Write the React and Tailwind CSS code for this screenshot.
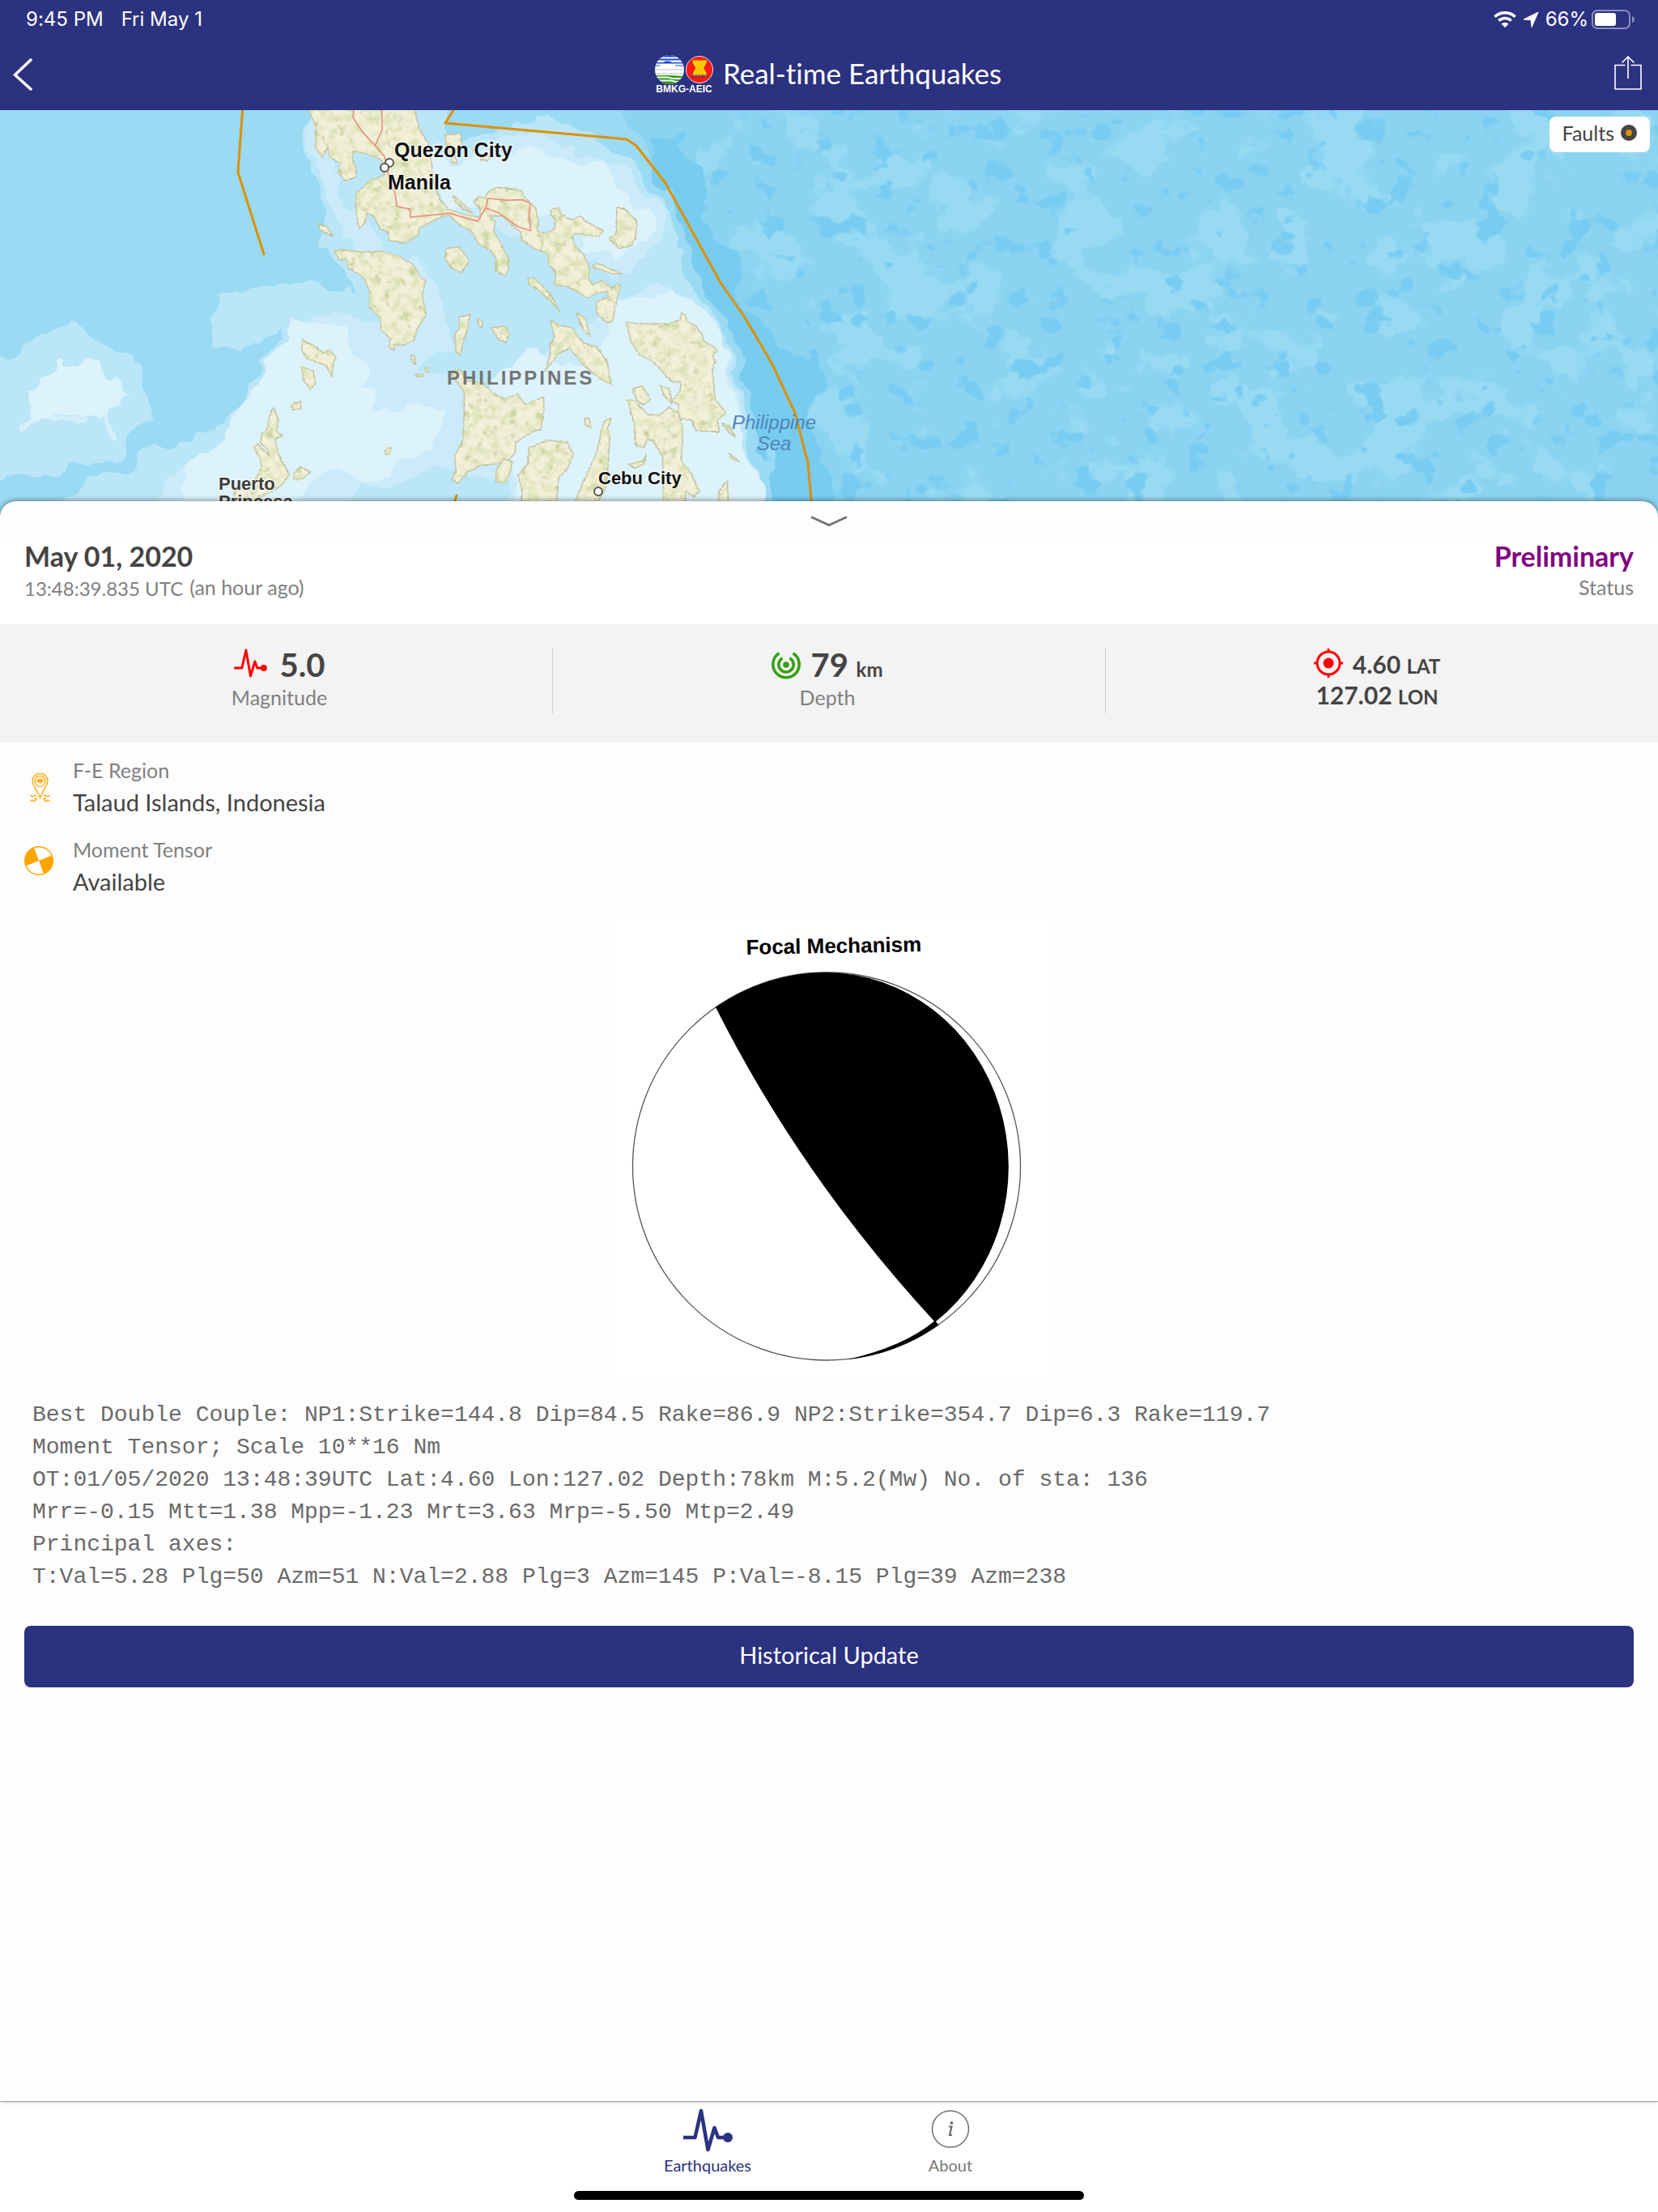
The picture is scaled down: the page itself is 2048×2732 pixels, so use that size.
import React from "react";

const LAND_WEST = [
  "M425,-20 430,30 450,80 450,160 475,190 495,155 500,190 540,215 535,250 560,280 600,265 598,225 585,200 590,170 640,180 690,200 712,225 700,260 650,280 600,330 600,400 612,460 635,430 640,400 665,410 690,460 720,470 720,500 780,512 830,480 835,455 900,420 940,405 980,440 1030,470 1050,510 1100,540 1120,570 1115,610 1150,632 1165,610 1165,570 1130,500 1110,470 1115,430 1090,410 1140,410 1190,455 1210,470 1215,500 1260,530 1310,550 1315,590 1340,620 1335,665 1380,670 1460,715 1490,695 1530,690 1535,710 1490,730 1490,770 1530,805 1550,800 1562,740 1578,665 1565,660 1550,680 1510,650 1475,665 1460,640 1465,600 1440,550 1410,520 1400,490 1410,475 1450,480 1500,485 1515,465 1450,430 1430,410 1400,425 1360,405 1350,380 1325,385 1320,405 1340,425 1335,460 1300,475 1270,465 1275,430 1265,380 1230,350 1215,320 1180,310 1120,305 1090,320 1078,345 1055,338 1035,360 1060,385 1060,415 1000,405 940,385 910,350 890,300 880,220 870,150 830,80 810,-20Z",
  "M520,540 545,535 620,545 690,540 760,560 810,590 840,640 858,650 845,700 858,780 825,830 815,870 770,890 740,885 740,910 718,890 730,870 690,830 690,790 650,750 650,690 630,640 570,600 565,570 535,570Z",
  "M935,530 980,525 1020,575 990,620 950,600 930,570Z",
  "M460,440 490,450 515,485 490,475 465,460Z",
  "M985,785 1022,775 1010,840 1000,860 985,925 970,915 965,850 980,830Z",
  "M1050,790 1068,800 1065,825 1052,815Z",
  "M1100,825 1150,818 1168,845 1155,880 1125,865Z",
  "M400,870 450,895 480,920 500,905 525,935 515,960 510,1005 490,965 420,940 398,905Z",
  "M398,968 440,985 450,1030 430,1052 405,1020Z",
  "M360,1110 395,1095 395,1125 365,1128Z",
  "M293,1120 312,1165 305,1210 330,1225 300,1235 310,1290 325,1320 352,1370 320,1410 290,1430 240,1450 230,1500 140,1500 150,1430 220,1400 250,1340 240,1300 220,1265 235,1255 280,1300 270,1275 245,1250 250,1215 270,1200 280,1150Z",
  "M370,1360 395,1340 430,1358 400,1385 370,1385Z",
  "M705,1280 730,1265 725,1290 710,1295Z",
  "M802,925 815,930 820,960 808,955Z",
  "M822,1000 850,996 848,1004 825,1006Z",
  "M855,972 868,975 866,988 856,985Z",
  "M950,985 985,980 1010,1020 1070,1030 1110,1070 1150,1088 1200,1070 1225,1110 1295,1080 1295,1130 1285,1200 1250,1210 1190,1250 1190,1290 1150,1325 1060,1335 1010,1360 980,1400 955,1390 970,1350 965,1300 995,1240 1000,1150 1000,1060 970,1020Z",
  "M1145,1310 1178,1320 1170,1360 1150,1400 1118,1395 1120,1350Z",
  "M1240,1270 1310,1240 1380,1250 1405,1290 1380,1350 1350,1380 1340,1500 1210,1500 1215,1430 1200,1370 1235,1330Z",
  "M930,110 985,105 990,140 960,170 975,215 955,210 935,150Z",
  "M1030,165 1060,180 1100,190 1090,205 1065,200Z",
  "M960,335 985,355 1030,400 1000,385 965,355Z",
];

const LAND_EAST = [
  "M118,795 150,815 200,825 240,880 290,895 330,950 345,1035 300,1010 245,965 190,900 150,920 100,985 120,920 118,890 135,860Z",
  "M38,640 60,640 120,700 155,765 120,725 70,680 40,665Z",
  "M215,768 250,790 265,855 240,830Z",
  "M365,380 395,385 440,430 435,490 420,520 375,530 335,495 365,475Z",
  "M275,600 290,585 385,625 350,625Z",
  "M400,805 480,810 560,810 600,795 605,770 620,775 625,800 655,815 680,845 690,875 738,905 720,930 732,950 720,980 730,1090 770,1140 740,1165 745,1210 660,1205 640,1165 590,1160 595,1110 570,1095 600,1060 605,1025 570,1025 500,950 450,925 420,880Z",
  "M755,1180 780,1185 805,1230 785,1215Z",
  "M525,1040 560,1050 570,1105 545,1080Z",
  "M425,1050 460,1040 490,1090 465,1110 440,1095Z",
  "M405,1090 430,1095 480,1145 520,1150 560,1120 595,1140 610,1200 605,1320 640,1360 670,1430 650,1450 620,1430 620,1500 540,1500 535,1300 500,1245 480,1235 465,1270 435,1260 430,1180Z",
  "M345,1160 330,1200 340,1230 330,1380 320,1430 270,1500 200,1500 230,1420 290,1290 310,1200 320,1170Z",
  "M410,1330 460,1320 475,1295 465,1330 430,1345Z",
  "M245,1160 262,1160 270,1195 250,1185Z",
  "M780,1290 820,1320 790,1310Z",
  "M775,1390 780,1500 740,1500 745,1430Z",
];

function FaultMap() {
  return (
    <svg
      className="block h-[504px] w-full"
      viewBox="0 136 2048 504"
      preserveAspectRatio="xMidYMin slice"
      role="img"
      aria-label="Map of the Philippines with fault lines"
    >
      <defs>
        <filter id="wobble" x="-5%" y="-5%" width="110%" height="110%" colorInterpolationFilters="sRGB">
          <feTurbulence type="fractalNoise" baseFrequency="0.02" numOctaves="3" seed="4" result="n" />
          <feDisplacementMap in="SourceGraphic" in2="n" scale="46" xChannelSelector="R" yChannelSelector="G" />
        </filter>
        <filter id="land" x="-2%" y="-2%" width="104%" height="104%" colorInterpolationFilters="sRGB">
          <feTurbulence type="fractalNoise" baseFrequency="0.09" numOctaves="3" seed="9" result="n" />
          <feDisplacementMap in="SourceGraphic" in2="n" scale="10" xChannelSelector="R" yChannelSelector="G" result="shape" />
          <feTurbulence type="fractalNoise" baseFrequency="0.03" numOctaves="5" seed="21" result="t" />
          <feColorMatrix in="t" type="matrix" values="0 0 0 0 0.82  0 0 0 0 0.87  0 0 0 0 0.66  3 0 0 0 -1.25" result="green" />
          <feComposite in="green" in2="shape" operator="in" result="tex" />
          <feComponentTransfer in="tex" result="soft">
            <feFuncA type="linear" slope="0.7" />
          </feComponentTransfer>
          <feColorMatrix in="t" type="matrix" values="0 0 0 0 0.66  0 0 0 0 0.72  0 0 0 0 0.44  0 6 0 0 -3.7" result="hills" />
          <feComposite in="hills" in2="shape" operator="in" result="hillTex" />
          <feComponentTransfer in="hillTex" result="hillSoft">
            <feFuncA type="linear" slope="0.4" />
          </feComponentTransfer>
          <feMerge>
            <feMergeNode in="shape" />
            <feMergeNode in="soft" />
            <feMergeNode in="hillSoft" />
          </feMerge>
        </filter>
        <filter id="lightPatches" x="0" y="0" width="100%" height="100%" colorInterpolationFilters="sRGB">
          <feTurbulence type="fractalNoise" baseFrequency="0.013 0.015" numOctaves="4" seed="12" />
          <feColorMatrix type="matrix" values="0 0 0 0 0.6  0 0 0 0 0.855  0 0 0 0 0.953  14 0 0 0 -7.5" />
          <feComposite in2="SourceAlpha" operator="in" />
        </filter>
        <filter id="darkPatches" x="0" y="0" width="100%" height="100%" colorInterpolationFilters="sRGB">
          <feTurbulence type="fractalNoise" baseFrequency="0.028 0.034" numOctaves="3" seed="33" />
          <feColorMatrix type="matrix" values="0 0 0 0 0.475  0 0 0 0 0.8  0 0 0 0 0.945  14 0 0 0 -8.7" />
          <feComposite in2="SourceAlpha" operator="in" />
        </filter>
      </defs>

      <rect x="0" y="136" width="2048" height="504" fill="#8ad3f1" />
      <rect x="860" y="136" width="1188" height="504" fill="#000" filter="url(#lightPatches)" />
      <rect x="860" y="136" width="1188" height="504" fill="#000" filter="url(#darkPatches)" />

      <g filter="url(#wobble)">
        <path fill="#9adaf3" d="M-60,60 760,60 790,170 830,240 880,330 930,430 960,500 980,700 -60,700Z" />
        <path fill="#78ccf0" d="M800,170 843,170 860,205 870,250 885,290 905,320 910,370 950,410 970,445 1010,450 1016,470 1000,510 1005,550 1030,600 1045,700 960,700 952,560 935,500 905,410 865,335 830,255Z" />
        <path fill="#bae6f8" d="M375,80 385,200 400,260 395,300 430,330 440,360 390,355 350,350 300,370 260,360 270,420 310,440 300,500 240,540 180,560 120,590 60,630 40,700 955,700 935,560 920,480 885,400 845,340 835,290 800,230 770,190 720,160 640,150 560,175 530,80Z" />
        <path fill="#bae6f8" d="M40,420 90,400 120,420 170,450 190,520 150,560 90,570 30,590 -40,600 -40,460Z" />
        <path fill="#cbebfb" d="M400,80 410,180 430,240 470,300 520,330 560,420 520,460 640,480 660,440 800,350 880,400 915,480 925,560 945,700 120,700 200,600 300,540 330,450 390,380 460,400 490,370 430,290 400,230 385,160Z" />
        <path fill="#cbebfb" d="M540,190 640,165 720,185 770,210 820,270 800,320 760,340 700,300 560,260Z" />
        <path fill="#dcf3fc" d="M367,390 327,447 307,490 270,530 240,573 210,640 360,625 387,590 447,593 533,557 547,507 480,500 437,490 453,450 437,413Z" />
        <path fill="#dcf3fc" d="M527,200 600,190 700,195 743,200 767,240 800,257 797,303 767,323 707,290 640,250 540,250Z" />
        <path fill="#dcf3fc" d="M767,360 853,373 890,417 917,517 940,597 945,700 690,700 680,500 740,430Z" />
        <path fill="#dcf3fc" d="M640,420 760,480 760,520 730,560 700,700 600,700 640,560 610,470Z" />
        <path fill="#dcf3fc" d="M70,450 140,450 160,490 120,520 80,510 40,530 30,480Z" />
        <path fill="#bae6f8" d="M590,330 640,340 670,400 650,430 610,470 580,440 600,400Z" />
        <path fill="#9adaf3" d="M345,400 320,450 300,480 300,440Z" />
        <path fill="#bae6f8" d="M440,600 520,590 560,570 620,590 600,700 400,700Z" />
      </g>
      <g fill="none" stroke="#dcf3fc" strokeWidth="8" strokeLinecap="round" opacity="0.8" filter="url(#wobble)">
        <path d="M40,500 60,470 90,460M30,540 60,515 100,520M150,480 130,510 140,540" />
      </g>

      <g transform="translate(240 130) scale(0.33333)">
        <g filter="url(#land)" fill="#f3f0da" stroke="#c6c3a6" strokeWidth="5" strokeLinejoin="round">
          {LAND_WEST.map((d) => (
            <path key={d} d={d} />
          ))}
          <g transform="translate(1200 0)">
            {LAND_EAST.map((d) => (
              <path key={d} d={d} />
            ))}
          </g>
        </g>
        <g fill="none" stroke="#e8907f" strokeWidth="5" strokeLinejoin="round">
          <path d="M593,-10 588,45 620,95 670,150 705,190 720,260 745,330 750,375 800,385 800,415 900,405 945,400 1050,430 1080,380" />
          <path d="M693,-10 697,90 670,150" />
          <path d="M1080,385 1088,345 1160,352 1215,350 1245,362 1240,410 1247,465 1200,450 1130,400 1080,380" />
        </g>
      </g>

      <g fill="none" stroke="#dd9000" strokeWidth="3" strokeLinejoin="round" strokeLinecap="round">
        <path d="M300,130 294,213 326,314" />
        <path d="M564,130 550,152 774,172 786,180 822,226 890,349 920,392 954,450 982,510 998,572 1004,640" />
        <path d="M564,612 556,636" />
      </g>

      <g fill="#fff" stroke="#555" strokeWidth="2">
        <circle cx="481" cy="201" r="5" />
        <circle cx="475" cy="207" r="5" />
        <circle cx="739" cy="607" r="5" />
      </g>

      <g className="font-['Liberation_Sans',Arial,sans-serif]">
        <g fontWeight="700" fill="#111" stroke="#fff" strokeOpacity="0.6" strokeWidth="3" paintOrder="stroke">
          <text x="487" y="194" fontSize="25">Quezon City</text>
          <text x="479" y="234" fontSize="25">Manila</text>
          <text x="739" y="598" fontSize="22">Cebu City</text>
        </g>
        <g fontWeight="700" fill="#3c3c3c" stroke="#fff" strokeOpacity="0.6" strokeWidth="3" paintOrder="stroke">
          <text x="270" y="605" fontSize="22">Puerto</text>
          <text x="270" y="627" fontSize="22">Princesa</text>
        </g>
        <text x="552" y="475" fontSize="24" fontWeight="700" fill="#757575" className="tracking-[3px]">
          PHILIPPINES
        </text>
        <g fontSize="24" fontStyle="italic" fill="#4d86b8" textAnchor="middle">
          <text x="956" y="530">Philippine</text>
          <text x="956" y="556">Sea</text>
        </g>
      </g>
    </svg>
  );
}

function Logo() {
  return (
    <svg className="h-12 w-[76px]" viewBox="-2 0 76 48" role="img" aria-label="BMKG-AEIC">
      <defs>
        <clipPath id="globe">
          <circle cx="18" cy="18" r="18" />
        </clipPath>
      </defs>
      <g clipPath="url(#globe)">
        <rect width="36" height="36" fill="#fff" />
        <path fill="#1e48cf" d="M0 0H36V2.500H0ZM0 4.500H36V6.500H0ZM0 9H10L13 7.500H18L21 9H36V10.500H0ZM0 12.500H6V13.500H0ZM25 12.500H36V13.500H25Z" />
        <path fill="#b5bdb5" d="M0 17.500H36V18.500H0ZM0 22.500H36V23.500H0Z" />
        <path fill="#2f9a1c" d="M0 25H18L36 26V28H22L16 26.500H0ZM0 28.500H17L22 30H36V32H26L20 30.500H0ZM2 32.500H20L26 34H34V36H4Z" />
      </g>
      <circle cx="55" cy="18" r="16.500" fill="#fb1a12" stroke="#dfe3f5" strokeWidth="1" />
      <path fill="#ffd500" d="M46 6.500H64.500L63 11L60 16L63 21L64.500 26H46L47.500 21L50.500 16L47.500 11Z" />
      <path stroke="#f0a400" strokeWidth="0.600" d="M50 7 53 16 50 26M53 7 54.500 16 53 26M57.500 7 56 16 57.500 26M60.500 7 57.500 16 60.500 26" fill="none" />
      <text x="55" y="28" textAnchor="middle" fontSize="7" fontWeight="700" fill="#5c2a6b" className="font-['Liberation_Sans',sans-serif]">
        asean
      </text>
      <text x="36" y="46" textAnchor="middle" fontSize="12" fontWeight="700" fill="#fff" className="font-['Liberation_Sans',sans-serif]">
        BMKG-AEIC
      </text>
    </svg>
  );
}

function PulseIcon({ className }) {
  return (
    <svg className={className} viewBox="0 0 61 54" fill="none" aria-hidden="true">
      <path d="M0 36H14.500L22 3L30.500 51L38.500 24L43 36H54" stroke="currentColor" strokeWidth="4.500" strokeLinejoin="round" />
      <circle cx="55" cy="36" r="6" fill="currentColor" />
    </svg>
  );
}

function StatusBar() {
  return (
    <div className="flex h-12 items-center justify-between pr-7 pl-8 font-[Inter,sans-serif] text-[24px] leading-8">
      <div className="flex gap-[22px]">
        <span>9:45 PM</span>
        <span>Fri May 1</span>
      </div>
      <div className="flex items-center">
        <svg className="h-5 w-7" viewBox="0 0 28 20" fill="none" aria-label="Wi-Fi">
          <path d="M1.500 6.800A18 18 0 0 1 26.500 6.800" stroke="#fff" strokeWidth="3.600" />
          <path d="M6.200 11.500A11.500 11.500 0 0 1 21.800 11.500" stroke="#fff" strokeWidth="3.400" />
          <path d="M14 20 9.500 15.500A6.500 6.500 0 0 1 18.500 15.500Z" fill="#fff" />
        </svg>
        <svg className="ml-2 h-5 w-5" viewBox="0 0 20 20" aria-label="Location">
          <path d="M19 1 11 19.500 10 10.500 1 10Z" fill="#fff" stroke="#fff" strokeLinejoin="round" />
        </svg>
        <span className="ml-2">66%</span>
        <svg className="ml-1 h-6 w-[54px]" viewBox="0 0 54 24" fill="none" aria-label="Battery">
          <rect x="1" y="1" width="46" height="22" rx="6" stroke="#8a8fbb" strokeWidth="2" />
          <rect x="4" y="4" width="26" height="16" rx="3" fill="#fff" />
          <path d="M50 8Q53 9 53 12T50 16Z" fill="#8a8fbb" />
        </svg>
      </div>
    </div>
  );
}

function NavBar() {
  return (
    <div className="grid h-[88px] grid-cols-[1fr_auto_1fr] items-center pr-5 pl-4">
      <button type="button" aria-label="Back" className="justify-self-start">
        <svg className="h-10 w-6" viewBox="0 0 24 40" fill="none">
          <path d="M23 1 2.500 20.500 23 39" stroke="#fff" strokeWidth="3.500" />
        </svg>
      </button>
      <div className="flex items-center gap-2.5">
        <Logo />
        <h1 className="pb-1 text-[35px] leading-12">Real-time Earthquakes</h1>
      </div>
      <button type="button" aria-label="Share" className="justify-self-end pb-1">
        <svg className="h-[42px] w-[34px]" viewBox="0 0 34 42" fill="none" stroke="#fff" strokeWidth="1.600">
          <path d="M13.500 11.500H1V41H33V11.500H20.500M17 28V1M9.500 8.500 17 1 24.500 8.500" />
        </svg>
      </button>
    </div>
  );
}

function SummaryHeader() {
  return (
    <div className="flex justify-between bg-white px-[30px] pt-0.5 pb-[30px]">
      <div>
        <h2 className="text-[34px] leading-8 font-bold">May 01, 2020</h2>
        <p className="mt-1.5 flex gap-2 leading-8 text-[#808080]">
          <span className="pt-1 text-[24px] leading-7">13:48:39.835 UTC</span>
          <span className="text-[25px]">(an hour ago)</span>
        </p>
      </div>
      <div className="text-right">
        <p className="text-[34px] leading-8 font-bold text-[#800080]">Preliminary</p>
        <p className="mt-1.5 text-[25px] leading-8 text-[#808080]">Status</p>
      </div>
    </div>
  );
}

function Metrics() {
  return (
    <div className="grid grid-cols-[1fr_1px_1fr_1px_1fr] border-b border-[#ebebeb] bg-[#f3f3f3] pt-[30px] pb-[34px]">
      <div className="pl-2 text-center">
        <div className="flex justify-center gap-4">
          <PulseIcon className="h-9 w-[41px] text-[#ff0000]" />
          <span className="text-[40px] leading-10 font-bold">5.0</span>
        </div>
        <div className="mt-1 text-[25px] leading-8 text-[#808080]">Magnitude</div>
      </div>
      <div className="h-20 bg-[#cfcfcf]" />
      <div className="pr-1 text-center">
        <div className="flex justify-center gap-3">
          <svg className="h-10 w-9" viewBox="0 0 36 40" fill="none" stroke="#34a012" strokeWidth="3.500" aria-hidden="true">
            <path d="M9.500 5.800A16.200 16.200 0 1 0 26.500 5.800M13.500 11.800A9.200 9.200 0 1 0 22.500 11.800" />
            <circle cx="18" cy="20" r="3.800" fill="#34a012" stroke="none" />
          </svg>
          <span className="text-[40px] leading-10 font-bold">
            79 <span className="text-[24px] leading-none">km</span>
          </span>
        </div>
        <div className="mt-1 text-[25px] leading-8 text-[#808080]">Depth</div>
      </div>
      <div className="h-20 bg-[#cfcfcf]" />
      <div className="pr-3 text-center text-[30px] leading-[38px] font-bold">
        <div className="flex justify-center gap-3">
          <svg className="h-9 w-9" viewBox="0 0 36 36" fill="none" stroke="#ff0000" strokeWidth="3" aria-hidden="true">
            <circle cx="18" cy="18" r="14" />
            <circle cx="18" cy="18" r="6.500" fill="#ff0000" stroke="none" />
            <path d="M18 0V5M18 31V36M0 18H5M31 18H36" />
          </svg>
          <span>
            4.60 <span className="text-[24px] leading-none">LAT</span>
          </span>
        </div>
        <div>
          127.02 <span className="text-[24px] leading-none">LON</span>
        </div>
      </div>
    </div>
  );
}

function RegionIcon() {
  return (
    <svg className="mt-5 h-9 w-9" viewBox="0 0 36 36" fill="none" stroke="#ffa500" strokeWidth="1.300" aria-hidden="true">
      <path d="M19.500 30.500C17 23 10 15 10 9.800A9.500 9.500 0 0 1 29 9.800C29 15 22 23 19.500 30.500Z" />
      <circle cx="19.500" cy="9.800" r="6.500" />
      <path d="M14.500 9.800H16.500L17.300 7.500 18.400 12 19.500 6 20.600 12.500 21.700 7.500 22.500 9.800H24.500" />
      <path d="M7.500 27Q10 30 12 28T15 29M7.500 35Q9 32 11 34T15 32M12 31.500H15.500M31.500 27Q29 30 27 28T24 29M31.500 35Q30 32 28 34T24 32M27 31.500H23.500" />
    </svg>
  );
}

function TensorIcon() {
  return (
    <svg className="mt-3 h-9 w-9" viewBox="0 0 36 36" aria-hidden="true">
      <circle cx="18" cy="18" r="17.300" fill="#fff" stroke="#ffa500" strokeWidth="1.400" />
      <path fill="#ffa500" d="M18 18 34 11.500A17.300 17.300 0 0 1 24 34.300ZM18 18 2 24.500A17.300 17.300 0 0 1 12 1.700Z" />
    </svg>
  );
}

function Detail({ icon, label, value }) {
  return (
    <div className="flex items-start gap-6">
      {icon}
      <dl>
        <dt className="text-[25px] leading-8 text-[#808080]">{label}</dt>
        <dd className="mt-1 text-[29px] leading-10">{value}</dd>
      </dl>
    </div>
  );
}

function FocalMechanism() {
  return (
    <svg className="mx-auto mt-[22px] block h-[577px] w-[540px] bg-white" viewBox="0 0 540 577" role="img" aria-label="Focal Mechanism">
      <text
        x="276"
        y="46"
        textAnchor="middle"
        fontSize="26"
        fontWeight="700"
        transform="rotate(-1 276 46)"
        className="font-['Liberation_Sans',Arial,sans-serif]"
      >
        Focal Mechanism
      </text>
      <circle cx="267" cy="309.500" r="239.500" fill="#fff" stroke="#555" strokeWidth="1.300" />
      <path d="M130 113A239.500 239.500 0 0 1 267 70A227 240 0 0 1 401 502Q235 322 130 113Z" />
      <path d="M401 500 405.500 505.500A239.500 239.500 0 0 1 293 548Q363 532 401 500Z" />
    </svg>
  );
}

const SOLUTION = [
  "Best Double Couple: NP1:Strike=144.8 Dip=84.5 Rake=86.9 NP2:Strike=354.7 Dip=6.3 Rake=119.7",
  "Moment Tensor; Scale 10**16 Nm",
  "OT:01/05/2020 13:48:39UTC Lat:4.60 Lon:127.02 Depth:78km M:5.2(Mw) No. of sta: 136",
  "Mrr=-0.15 Mtt=1.38 Mpp=-1.23 Mrt=3.63 Mrp=-5.50 Mtp=2.49",
  "Principal axes:",
  "T:Val=5.28 Plg=50 Azm=51 N:Val=2.88 Plg=3 Azm=145 P:Val=-8.15 Plg=39 Azm=238",
].join("\n");

function TabBar() {
  return (
    <nav className="border-t border-[#b2b2b2] bg-white pt-2 pb-[15px]">
      <div className="flex justify-center text-[20px] leading-6">
        <a href="#earthquakes" aria-current="page" className="flex w-[300px] flex-col items-center text-[#2b3280]">
          <PulseIcon className="h-[54px] w-[61px]" />
          <span className="mt-1">Earthquakes</span>
        </a>
        <a href="#about" className="flex w-[300px] flex-col items-center text-[#777]">
          <svg className="h-[54px] w-12" viewBox="0 0 48 54" fill="none" aria-hidden="true">
            <circle cx="24" cy="25.500" r="22.500" stroke="#6e6e6e" strokeWidth="1.500" />
            <circle cx="25.500" cy="18" r="1.900" fill="#6e6e6e" />
            <path d="M22 22.500H25.500L23 33H26" stroke="#6e6e6e" strokeWidth="2.200" />
          </svg>
          <span className="mt-1">About</span>
        </a>
      </div>
      <div className="mx-auto mt-[20px] h-[11px] w-[630px] rounded-full bg-black" />
    </nav>
  );
}

export default function App() {
  return (
    <div className="flex min-h-screen flex-col bg-[#fdfdfd] font-[Lato,sans-serif] text-[#444] [font-variant-ligatures:none]">
      <header className="bg-[#2b3280] text-white">
        <StatusBar />
        <NavBar />
      </header>

      <div className="relative">
        <FaultMap />
        <button
          type="button"
          className="absolute top-2 right-2.5 flex h-11 items-center gap-2 rounded-lg bg-white px-4 pb-1 text-[25px] leading-8"
        >
          Faults
          <span className="size-5 rounded-full border-[6px] border-[#444] bg-[#dd9000]" />
        </button>
      </div>

      <main className="relative -mt-[21px] flex-1 rounded-t-[20px] bg-[#fdfdfd] shadow-[0_-1px_6px_rgba(0,0,0,0.45)]">
        <button type="button" aria-label="Collapse details" className="flex h-[50px] w-full justify-center pt-[18px]">
          <svg className="h-[14px] w-[46px]" viewBox="0 0 46 14" fill="none">
            <path d="M1 1.500 23 11.500 45 1.500" stroke="#777" strokeWidth="3" />
          </svg>
        </button>
        <SummaryHeader />
        <Metrics />
        <section className="px-[30px] pt-[19px]">
          <div className="flex flex-col gap-[22px]">
            <Detail icon={<RegionIcon />} label="F-E Region" value="Talaud Islands, Indonesia" />
            <Detail icon={<TensorIcon />} label="Moment Tensor" value="Available" />
          </div>
          <FocalMechanism />
          <pre className="mt-5 px-2.5 font-['Liberation_Mono',monospace] text-[28px] leading-10 text-[#6a6a6a]">{SOLUTION}</pre>
          <button type="button" className="mt-10 block h-[76px] w-full rounded-lg bg-[#2b3280] pb-1 text-[29px] text-white">
            Historical Update
          </button>
        </section>
      </main>

      <TabBar />
    </div>
  );
}
